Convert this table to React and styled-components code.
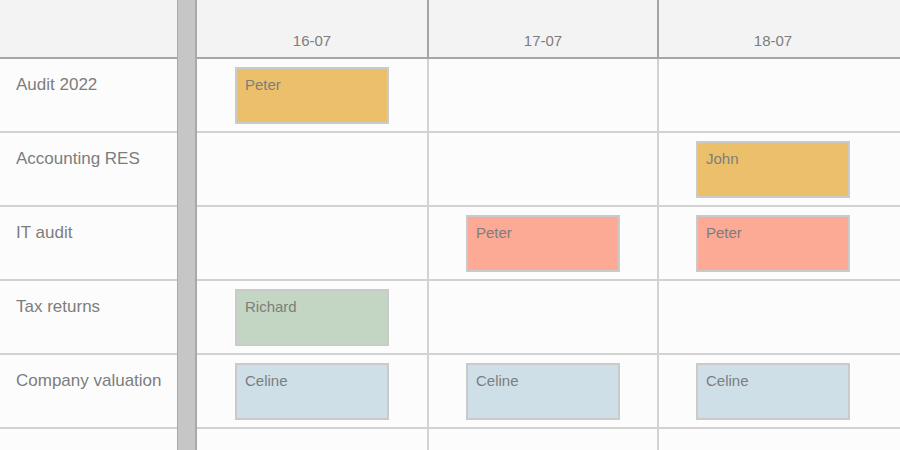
import React from 'react'
import styled, { createGlobalStyle } from 'styled-components'

const DAYS = ['16-07', '17-07', '18-07']

const TONES = {
  orange: '#ecc06b',
  red: '#fca995',
  green: '#c2d6c3',
  blue: '#cfdfe8',
}

const TASKS = [
  { label: 'Audit 2022', cells: [{ name: 'Peter', tone: 'orange' }, null, null] },
  { label: 'Accounting RES', cells: [null, null, { name: 'John', tone: 'orange' }] },
  { label: 'IT audit', cells: [null, { name: 'Peter', tone: 'red' }, { name: 'Peter', tone: 'red' }] },
  { label: 'Tax returns', cells: [{ name: 'Richard', tone: 'green' }, null, null] },
  {
    label: 'Company valuation',
    cells: [
      { name: 'Celine', tone: 'blue' },
      { name: 'Celine', tone: 'blue' },
      { name: 'Celine', tone: 'blue' },
    ],
  },
  { label: '', cells: [null, null, null] },
]

const GlobalStyle = createGlobalStyle`
  html, body {
    margin: 0;
    padding: 0;
    background: #fcfcfc;
  }
  * {
    box-sizing: border-box;
  }
`

const Scheduler = styled.div`
  display: flex;
  width: 900px;
  height: 450px;
  overflow: hidden;
  background: #fcfcfc;
  font-family: 'Liberation Sans', Arial, sans-serif;
  color: #7d7d7d;
`

const LabelPanel = styled.div`
  width: 177px;
  flex: none;
`

const Splitter = styled.div`
  width: 20px;
  flex: none;
  background: #c6c6c6;
  border-left: 1px solid #a9a9a9;
  border-right: 2px solid #a9a9a9;
`

const GridPanel = styled.div`
  flex: 1;
  min-width: 0;
`

const HeaderCell = styled.div`
  height: 59px;
  background: #f3f3f3;
  border-bottom: 2px solid #a6a6a6;
`

const DayRow = styled.div`
  display: grid;
  grid-template-columns: 232px 230px 230px 1fr;
  height: 59px;
  background: #f3f3f3;
  border-bottom: 2px solid #a6a6a6;
`

const DayCell = styled.div`
  display: flex;
  align-items: flex-end;
  justify-content: center;
  padding-bottom: 8px;
  font-size: 15px;
  border-right: 2px solid ${props => (props.$edge ? 'transparent' : '#a3a3a3')};
`

const LabelRow = styled.div`
  height: 74px;
  padding: 16px 16px 0;
  font-size: 17px;
  border-bottom: 2px solid #d2d2d2;
  white-space: nowrap;
`

const TaskRow = styled.div`
  display: grid;
  grid-template-columns: 232px 230px 230px 1fr;
  height: 74px;
  border-bottom: 2px solid #d2d2d2;
`

const TaskCell = styled.div`
  display: flex;
  justify-content: center;
  align-items: flex-start;
  padding-top: 8px;
  border-right: 2px solid ${props => (props.$edge ? 'transparent' : '#d2d2d2')};
`

const Booking = styled.div`
  width: 154px;
  height: 57px;
  padding: 7px 8px;
  font-size: 15px;
  background: ${props => TONES[props.$tone]};
  border: 2px solid #cacaca;
`

const App = () => (
  <>
    <GlobalStyle />
    <Scheduler>
      <LabelPanel>
        <HeaderCell />
        {TASKS.map((task, i) => (
          <LabelRow key={i}>{task.label}</LabelRow>
        ))}
      </LabelPanel>
      <Splitter />
      <GridPanel>
        <DayRow>
          {DAYS.map((day, i) => (
            <DayCell key={day} $edge={i === DAYS.length - 1}>
              {day}
            </DayCell>
          ))}
          <div />
        </DayRow>
        {TASKS.map((task, i) => (
          <TaskRow key={i}>
            {task.cells.map((cell, j) => (
              <TaskCell key={j} $edge={j === task.cells.length - 1}>
                {cell && <Booking $tone={cell.tone}>{cell.name}</Booking>}
              </TaskCell>
            ))}
            <div />
          </TaskRow>
        ))}
      </GridPanel>
    </Scheduler>
  </>
)

export default App
